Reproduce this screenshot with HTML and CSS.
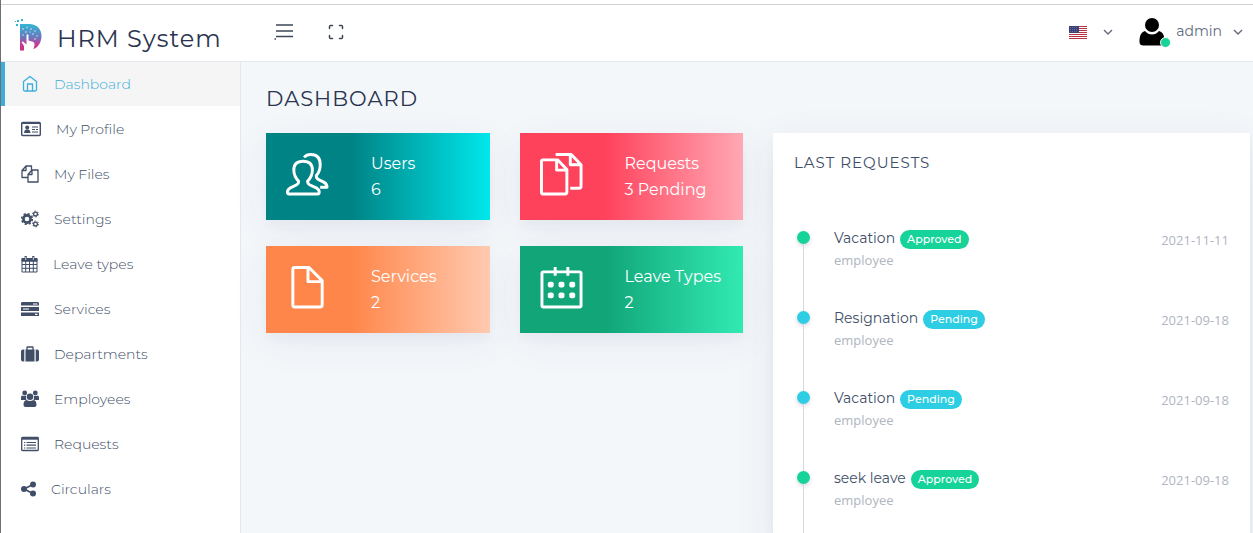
FILE: index.html
```html
<!DOCTYPE html>
<html lang="en">
<head>
<meta charset="utf-8">
<meta name="viewport" content="width=device-width, initial-scale=1">
<title>HRM System</title>
<link rel="stylesheet" href="styles.css">
</head>
<body>
<header class="topbar">
  <a class="brand" href="#">
    <svg class="brand-logo" width="28" height="34" viewBox="0 0 28 34" aria-hidden="true">
      <defs><linearGradient id="lg" x1="0" y1="0" x2="0" y2="1"><stop offset="0" stop-color="#31b6d4"/><stop offset=".5" stop-color="#6a78bd"/><stop offset=".75" stop-color="#c33f9a"/><stop offset="1" stop-color="#c82a7d"/></linearGradient></defs>
      <path fill="url(#lg)" d="M5 5h9c8 0 12.500 5 12.500 12 0 7-4 12-9 13.500L10 27.500l-1 4H5z"/>
      <path fill="#fff" d="M9 32v-5l-2.500-4 1.500-.5 3.500 3V16q1-1.500 2 0v5.500l5 1.500q1.500 1 1 3.500l-1.500 5.500z"/>
      <g fill="#31b6d4"><rect x="2" y="1" width="2" height="2"/><rect x="6" y="0" width="2" height="2"/><rect x="0" y="2" width="1" height="1"/><rect x="1" y="5" width="2" height="2"/></g>
      <g fill="#d5edf6"><circle cx="8" cy="10" r=".8"/><circle cx="11" cy="13" r=".8"/><circle cx="12" cy="8.500" r=".7"/><circle cx="16" cy="10" r=".8"/><circle cx="20" cy="12" r=".7"/><circle cx="18" cy="15" r=".8"/><circle cx="22" cy="17" r=".7"/><circle cx="20" cy="20" r=".8"/><circle cx="15" cy="13" r=".6"/><circle cx="8" cy="16" r=".7"/></g>
    </svg>
    <span class="brand-name">HRM System</span>
  </a>
  <div class="tools">
    <button class="icon-button" type="button" aria-label="Toggle menu">
      <svg width="20" height="18" viewBox="0 0 20 18" fill="none" stroke="#3c4757" stroke-width="1.500"><path d="M2 2h17M2 8h17M2 13.500h17"/><path d="M.5 16h1.500"/></svg>
    </button>
    <button class="icon-button" type="button" aria-label="Full screen">
      <svg width="16" height="16" viewBox="0 0 16 16" fill="none" stroke="#3c4757" stroke-width="1.500" stroke-linecap="round"><path d="M1.500 4.500V2.500q0-1 1-1h2M11.500 1.500h2q1 0 1 1v2M14.500 11.500v2q0 1-1 1h-2M4.500 14.500h-2q-1 0-1-1v-2"/></svg>
    </button>
  </div>
  <div class="account">
    <button class="icon-button language" type="button" aria-label="Language: English">
      <svg width="18" height="13" viewBox="0 0 18 13"><path fill="#fff" d="M0 0h18v13H0z"/><path stroke="#b8323f" d="M0 .5h18M0 2.500h18M0 4.500h18M0 6.500h18M0 8.500h18M0 10.500h18M0 12.500h18"/><path fill="#3b4278" d="M0 0h10v7H0z"/><path stroke="#8085ad" stroke-dasharray="1 1" stroke-width=".6" d="M1 1.500h8M1 3.500h8M1 5.500h8"/></svg>
      <svg width="10" height="8" viewBox="0 0 10 8" fill="none" stroke="#626b78" stroke-width="1.400"><path d="M1 2l4 4 4-4"/></svg>
    </button>
    <button class="icon-button user" type="button">
      <span class="avatar">
        <svg width="26" height="28" viewBox="0 0 26 28" aria-hidden="true"><circle cx="13" cy="7" r="7"/><path d="M6 13q3 3.500 7 3.500t7-3.500q5 1 5.500 8.500V24q0 3.500-4 3.500H4.500q-4 0-4-3.500v-2.500Q1 14 6 13z"/></svg>
        <span class="status"></span>
      </span>
      <span class="user-name">admin</span>
      <svg width="10" height="8" viewBox="0 0 10 8" fill="none" stroke="#626b78" stroke-width="1.400"><path d="M1 2l4 4 4-4"/></svg>
    </button>
  </div>
</header>
<div class="layout">
  <nav class="sidebar" aria-label="Main">
    <a class="nav-link active" href="#"><svg width="18" height="18" viewBox="0 0 18 18" fill="none" stroke="currentColor" stroke-width="1.300" stroke-linejoin="round"><path d="M2.500 6.500L9 1.500l6.500 5v8q0 1.500-1.500 1.500H4q-1.500 0-1.500-1.500zM6.500 16V9h5v7"/></svg>Dashboard</a>
    <a class="nav-link" href="#"><svg width="20" height="16" viewBox="0 0 20 16"><path fill="none" stroke="currentColor" stroke-width="1.400" d="M1.700 1.500h16.600q1 0 1 1v11q0 1-1 1H1.700q-1 0-1-1v-11q0-1 1-1z"/><path fill="currentColor" d="M1 1h18v2H1zM3 12q0-3 2-3.500h2.500q2 .5 2 3.500z"/><circle fill="currentColor" cx="6.200" cy="6.500" r="2"/><path stroke="currentColor" stroke-width="1.200" d="M11 6h6M11 8.500h3M15 8.500h2M11 11h6"/></svg>My Profile</a>
    <a class="nav-link" href="#"><svg width="18" height="18" viewBox="0 0 18 18" fill="none" stroke="currentColor" stroke-width="1.300" stroke-linejoin="round"><path d="M7 12.500H1V5.500L5 1h5.500v4M5 1v4.500H1M7 9.500L11 5h6v12H7zM11 5v4.500H7"/></svg>My Files</a>
    <a class="nav-link" href="#"><svg width="18" height="18" viewBox="0 0 18 18" fill="none" stroke="currentColor"><circle cx="6" cy="9" r="3.600" stroke-width="2.600"/><circle cx="6" cy="9" r="5.300" stroke-width="1.600" stroke-dasharray="2.160 2"/><circle cx="14.500" cy="4" r="1.900" stroke-width="1.300"/><circle cx="14.500" cy="4" r="2.900" stroke-width="1" stroke-dasharray="1.500 1.530"/><circle cx="14.500" cy="14" r="1.900" stroke-width="1.300"/><circle cx="14.500" cy="14" r="2.900" stroke-width="1" stroke-dasharray="1.500 1.530"/></svg>Settings</a>
    <a class="nav-link" href="#"><svg width="17" height="18" viewBox="0 0 17 18" fill="none" stroke="currentColor"><path d="M1 3.500h15v13.500H1zM1 9.500h15M1 13.300h15M4.700 6v11M8.500 6v11M12.300 6v11"/><path fill="currentColor" d="M1 3.500h15v2.700H1z"/><path stroke-width="2.200" d="M4.700 1v3.500M12.300 1v3.500"/><path stroke="#fff" stroke-width=".7" d="M4.700 2v3M12.300 2v3"/></svg>Leave types</a>
    <a class="nav-link" href="#"><svg width="18" height="16" viewBox="0 0 18 16"><path fill="currentColor" d="M1 1h16l1 .8v2.700H0V1.800zM0 6h18v4H0zM0 11.500h18V15H0z"/><path stroke="#fff" stroke-width="1.200" d="M12 3h4.500M2 8h6M14 13.300h2.500"/></svg>Services</a>
    <a class="nav-link" href="#"><svg width="18" height="16" viewBox="0 0 18 16"><path fill="currentColor" d="M4.500 3.500h9V15.500h-9zM2 3.500h1.300v12H2q-2 0-2-2v-8q0-2 2-2zM14.700 3.500H16q2 0 2 2v8q0 2-2 2h-1.300z"/><path fill="none" stroke="currentColor" stroke-width="1.300" d="M6 4V1.500q0-.5.5-.5h5q.5 0 .5.500V4"/></svg>Departments</a>
    <a class="nav-link" href="#"><svg width="18" height="18" viewBox="0 0 18 18" fill="currentColor"><circle cx="3.700" cy="3" r="2.400"/><circle cx="14.300" cy="3" r="2.400"/><path d="M0 10V7.500Q0 5.500 1.500 5.500q2 1 3.500.2V8q0 1 .5 2zM18 10V7.500q0-2-1.500-2-2 1-3.500.2V8q0 1-.5 2z"/><circle cx="9" cy="6.700" r="3.300"/><path d="M5.500 10q3.500 2 7 0 3 .5 3 5 0 2-2 2h-9q-2 0-2-2 0-4.500 3-5z"/></svg>Employees</a>
    <a class="nav-link" href="#"><svg width="18" height="16" viewBox="0 0 18 16" fill="none" stroke="currentColor"><path stroke-width="1.300" d="M1.500 1.500h15q.8 0 .8.800v11.400q0 .8-.8.800h-15q-.8 0-.8-.8V2.300q0-.8.8-.8z"/><path stroke-width="2" d="M1 2.700h16"/><path stroke-width="1.200" d="M3 6.500h1.200M5.500 6.500H15M3 9.200h1.200M5.500 9.200H15M3 12h1.200M5.500 12H15"/></svg>Requests</a>
    <a class="nav-link" href="#"><svg width="15" height="16" viewBox="0 0 15 16" fill="currentColor"><circle cx="3" cy="8" r="3"/><circle cx="12" cy="3.500" r="3"/><circle cx="12" cy="12.500" r="3"/><path fill="none" stroke="currentColor" stroke-width="1.800" d="M12 3.500L3 8l9 4.500"/></svg>Circulars</a>
  </nav>
  <main class="content">
    <h1 class="page-title">DASHBOARD</h1>
    <div class="grid">
      <a class="stat teal" href="#">
        <svg class="stat-icon" viewBox="0 0 44 44"><path d="M13 29Q8 24 8 17.500 8 8.500 17.500 8.500T27 17.500Q27 24 22 29q0 2.500 2 3.500l7.500 3.500q2.500 1.500 2.500 4 0 2-1.500 2H3q-1.500 0-1.500-2 0-2.500 2.500-4l7-3.500q2-1 2-3.500z"/><path d="M18.500 4.500Q21 1.500 25.500 1.500q9.500 0 9.500 10.500Q35 19 31 23q0 3 2 4l6 3q3 1.500 3 5h-7"/></svg>
        <span class="stat-text"><span>Users</span><span>6</span></span>
      </a>
      <a class="stat red" href="#">
        <svg class="stat-icon" viewBox="0 0 44 44"><path d="M3 7h15l9.500 10v23q0 2-2 2H3q-1.500 0-1.500-2V9Q1.500 7 3 7zM17 7v10.500h10.500"/><path d="M16 1.500h16L42 12v22q0 2-2 2h-9M31 1.500V12h11"/></svg>
        <span class="stat-text"><span>Requests</span><span>3 Pending</span></span>
      </a>
      <a class="stat orange" href="#">
        <svg class="stat-icon" viewBox="0 0 44 44"><path d="M9 1.500h14.500L37 15v25q0 2-2 2H9q-2 0-2-2V3.500q0-2 2-2zM22.500 1.500v14.500H37"/></svg>
        <span class="stat-text"><span>Services</span><span>2</span></span>
      </a>
      <a class="stat green" href="#">
        <svg class="stat-icon" viewBox="0 0 44 44"><path d="M3.500 6h37q1.500 0 1.500 1.500v33q0 1.500-1.500 1.500h-37Q2 42 2 40.500v-33Q2 6 3.500 6zM15.500 1v9M28.500 1v9"/><g fill="#fff" stroke="none"><rect x="8" y="16" width="6" height="6" rx="2"/><rect x="19" y="16" width="6" height="6" rx="2"/><rect x="30" y="16" width="6" height="6" rx="2"/><rect x="8" y="27" width="6" height="6" rx="2"/><rect x="19" y="27" width="6" height="6" rx="2"/><rect x="30" y="27" width="6" height="6" rx="2"/></g></svg>
        <span class="stat-text"><span>Leave Types</span><span>2</span></span>
      </a>
      <section class="panel">
        <h2 class="panel-title">LAST REQUESTS</h2>
        <ul class="timeline">
          <li class="event approved"><span class="marker"></span><div class="event-body"><div class="event-title">Vacation <span class="badge">Approved</span></div><div class="event-role">employee</div></div><time class="event-date">2021-11-11</time></li>
          <li class="event pending"><span class="marker"></span><div class="event-body"><div class="event-title">Resignation <span class="badge">Pending</span></div><div class="event-role">employee</div></div><time class="event-date">2021-09-18</time></li>
          <li class="event pending"><span class="marker"></span><div class="event-body"><div class="event-title">Vacation <span class="badge">Pending</span></div><div class="event-role">employee</div></div><time class="event-date">2021-09-18</time></li>
          <li class="event approved"><span class="marker"></span><div class="event-body"><div class="event-title">seek leave <span class="badge">Approved</span></div><div class="event-role">employee</div></div><time class="event-date">2021-09-18</time></li>
        </ul>
      </section>
    </div>
  </main>
</div>
</body>
</html>
```

FILE: styles.css
```css
* { box-sizing: border-box; }

body {
  margin: 0;
  min-height: 100vh;
  display: flex;
  flex-direction: column;
  border-left: 1px solid #6f6f72;
  background: #f3f7fa;
  color: #404e67;
  font-family: Montserrat, Inter, "Open Sans", sans-serif;
  font-size: 14px;
}

a { color: inherit; text-decoration: none; }
svg { flex: none; display: block; }

.topbar {
  display: flex;
  align-items: center;
  height: 58px;
  margin-top: 4px;
  padding-right: 10px;
  border-top: 1px solid #d3d3d5;
  border-bottom: 1px solid #e4e7ed;
  background: #fff;
  box-shadow: 0 -4px 0 #fff;
}

.brand {
  display: flex;
  align-items: center;
  gap: 14px;
  width: 240px;
  padding: 6px 0 0 14px;
}

.brand-name {
  padding-top: 6px;
  color: #2a3350;
  font-size: 24px;
  line-height: 32px;
  letter-spacing: 1px;
}

.tools { display: flex; align-items: center; gap: 34px; padding-left: 33px; padding-bottom: 2px; }

.icon-button {
  display: flex;
  align-items: center;
  padding: 0;
  border: 0;
  background: none;
  color: #626b80;
  font: inherit;
  cursor: pointer;
}

.account { display: flex; align-items: center; gap: 26px; margin-left: auto; padding-bottom: 2px; }
.language { gap: 16px; }
.user { gap: 11px; }
.avatar { position: relative; color: #000; }
.user-name { padding-bottom: 2px; font-size: 14px; line-height: 24px; }

.status {
  position: absolute;
  right: -6px;
  bottom: -2px;
  width: 11px;
  height: 11px;
  border: 1px solid #fff;
  border-radius: 50%;
  background: #16d39a;
}

.layout { display: flex; flex: 1; }

.sidebar {
  display: flex;
  flex-direction: column;
  gap: 1px;
  flex: none;
  width: 240px;
  border-right: 1px solid #e4e7ed;
  background: #fff;
}

.nav-link {
  display: flex;
  align-items: center;
  gap: 15px;
  height: 44px;
  padding: 0 0 1px 20px;
  color: #404e67;
  font-weight: 300;
}

.nav-link.active {
  padding-left: 16px;
  border-left: 4px solid #3bafda;
  background: #f5f5f5;
  color: #3bafda;
}

.content { display: flex; flex-direction: column; flex: 1; min-width: 0; padding: 23px 3px 0 25px; }

.page-title {
  margin: 0 0 20px;
  color: #2a3350;
  font-size: 21px;
  font-weight: 400;
  line-height: 28px;
  letter-spacing: 1px;
}

.grid {
  display: grid;
  flex: 1;
  grid-template-columns: repeat(4, 1fr);
  grid-template-rows: auto auto 1fr;
  gap: 26px 30px;
}

.stat {
  display: flex;
  align-items: center;
  gap: 42px;
  padding: 17px 0 16px 20px;
  color: #fff;
  box-shadow: 0 10px 40px rgba(62, 57, 107, .06), 0 8px 9px rgba(62, 57, 107, .03);
}

.stat-icon {
  width: 43px;
  height: 43px;
  margin-bottom: 6px;
  fill: none;
  stroke: #fff;
  stroke-width: 3;
  stroke-linejoin: round;
}

.stat-text { display: flex; flex-direction: column; padding-top: 1px; padding-bottom: 1px; font-size: 16px; line-height: 26px; white-space: nowrap; }
.teal { background: linear-gradient(to right, #008385 38%, #00e7eb); }
.red { background: linear-gradient(to right, #ff425c 38%, #ffa8b4); }
.orange { grid-row: 2; background: linear-gradient(to right, #ff864a 38%, #ffcab0); }
.green { background: linear-gradient(to right, #11a578 38%, #32eab2); }

.panel {
  grid-column: 3 / 5;
  grid-row: 1 / 4;
  padding: 18px 21px 0;
  background: #fff;
  box-shadow: 0 10px 40px rgba(62, 57, 107, .07), 0 8px 9px rgba(62, 57, 107, .06);
}

.panel-title {
  margin: 0 0 52px;
  font-size: 15px;
  font-weight: 400;
  line-height: 24px;
  letter-spacing: 1px;
}

.timeline { margin: 0; padding: 0 0 0 3px; list-style: none; }
.event { display: flex; min-height: 80px; }

.marker {
  display: flex;
  flex-direction: column;
  align-items: center;
  width: 13px;
  margin-right: 24px;
  padding-top: 4px;
  margin-bottom: -4px;
}

.marker::before {
  content: "";
  flex: none;
  width: 13px;
  height: 13px;
  border-radius: 50%;
  background: var(--tone);
  box-shadow: 0 2px 4px rgba(62, 57, 107, .2);
}

.marker::after { content: ""; flex: 1; width: 1px; background: #d5d8de; }
.approved { --tone: #16d39a; }
.pending { --tone: #2dcee3; }
.event-body { flex: 1; }
.event-title { display: flex; align-items: center; gap: 5px; font-size: 14px; line-height: 22px; }

.badge {
  margin-top: 3px;
  padding: 0 7px;
  border-radius: 10px;
  background: var(--tone);
  color: #fff;
  font-size: 11px;
  font-weight: 500;
  line-height: 19px;
}

.event-role, .event-date { color: #b0b5bf; font-family: "Open Sans", sans-serif; font-size: 13px; line-height: 22px; }
.event-date { padding-top: 2px; }
```
